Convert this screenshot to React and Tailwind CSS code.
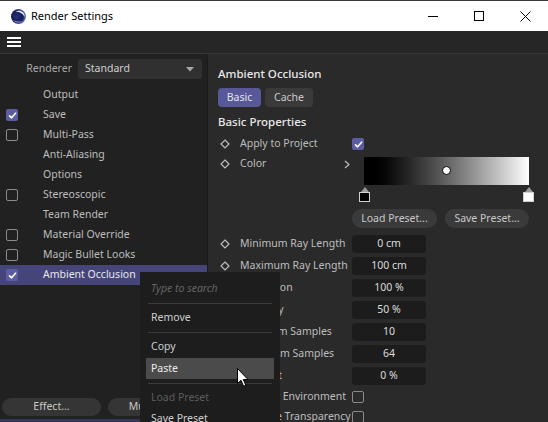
import React from "react";

const font = { fontFamily: '"Noto Sans", "Open Sans", sans-serif' };

function Check({ on }) {
  if (on)
    return (
      <div className="w-[12px] h-[12px] rounded-[2px] bg-[#5c5ca3] flex items-center justify-center shrink-0">
        <svg width="9" height="9" viewBox="0 0 9 9">
          <path d="M1.5 4.8 L3.6 6.8 L7.6 2.2" stroke="#fff" strokeWidth="1.6" fill="none" strokeLinecap="round" strokeLinejoin="round" />
        </svg>
      </div>
    );
  return <div className="w-[12px] h-[12px] rounded-[2px] border-[1.5px] border-[#8a8a8a] shrink-0" />;
}

function Diamond() {
  return (
    <svg width="10" height="10" viewBox="0 0 10 10" className="shrink-0">
      <path d="M5 1 L9 5 L5 9 L1 5 Z" stroke="#bdbdbd" strokeWidth="1.2" fill="none" />
    </svg>
  );
}

const listItems = [
  ["Output", null],
  ["Save", true],
  ["Multi-Pass", false],
  ["Anti-Aliasing", null],
  ["Options", null],
  ["Stereoscopic", false],
  ["Team Render", null],
  ["Material Override", false],
  ["Magic Bullet Looks", false],
  ["Ambient Occlusion", true],
];

const fields = [
  ["Minimum Ray Length", "0 cm"],
  ["Maximum Ray Length", "100 cm"],
  ["Dispersion", "100 %"],
  ["Accuracy", "50 %"],
  ["Minimum Samples", "10"],
  ["Maximum Samples", "64"],
  ["Contrast", "0 %"],
];

export default function App() {
  return (
    <div className="relative w-[548px] h-[422px] overflow-hidden bg-[#2a2a2a] text-[10.5px] whitespace-nowrap" style={font}>
      {/* Title bar */}
      <div className="h-[31px] bg-white border-t border-[#3a3a3a] flex items-center">
        <div className="ml-[10px] w-[17px] h-[17px]">
          <svg width="17" height="17" viewBox="0 0 17 17">
            <defs>
              <radialGradient id="g1" cx="0.4" cy="0.5" r="0.6">
                <stop offset="0" stopColor="#24307a" />
                <stop offset="0.65" stopColor="#161c52" />
                <stop offset="1" stopColor="#7480d0" />
              </radialGradient>
            </defs>
            <circle cx="8.5" cy="8.5" r="7.5" fill="url(#g1)" />
            <path d="M5.5 3.4 C9.8 1.4 15 4 14.7 9 C13.4 5.8 10 3.6 5.5 3.4 Z" fill="#eef0ff" />
            <path d="M3 12 C5 15 10 15.5 12.5 13 C9 14 5.5 13.5 3 12 Z" fill="#8d97dc" />
          </svg>
        </div>
        <span className="ml-[4px] text-[11px] text-black">Render Settings</span>
        <div className="ml-auto flex items-center h-full">
          <div className="w-[46px] h-full flex items-center justify-center">
            <div className="w-[10px] h-[1px] bg-black" />
          </div>
          <div className="w-[46px] h-full flex items-center justify-center">
            <div className="w-[10px] h-[10px] border border-black" />
          </div>
          <div className="w-[46px] h-full flex items-center justify-center">
            <svg width="11" height="11" viewBox="0 0 11 11">
              <path d="M0.5 0.5 L10.5 10.5 M10.5 0.5 L0.5 10.5" stroke="#000" strokeWidth="1" />
            </svg>
          </div>
        </div>
      </div>

      {/* Toolbar */}
      <div className="h-[23px] bg-[#262626] border-b border-[#363636] flex items-center pl-[7px]">
        <div className="flex flex-col gap-[2px]">
          <div className="w-[14px] h-[2px] bg-white" />
          <div className="w-[14px] h-[2px] bg-white" />
          <div className="w-[14px] h-[2px] bg-white" />
        </div>
      </div>

      {/* Main */}
      <div className="flex h-[368px]">
        {/* Left panel */}
        <div className="w-[208px] bg-[#212121] flex flex-col border-r border-[#1a1a1a]">
          <div className="flex items-center h-[20px] mt-[5px]">
            <span className="w-[72px] text-right text-[#a8a8a8]">Renderer</span>
            <div className="ml-[6px] w-[124px] h-[20px] rounded-[3px] bg-[#303030] flex items-center pl-[7px] pr-[8px]">
              <span className="text-[#cfcfcf]">Standard</span>
              <svg className="ml-auto" width="8" height="5" viewBox="0 0 8 5">
                <path d="M0 0 L8 0 L4 4.5 Z" fill="#a8a8a8" />
              </svg>
            </div>
          </div>
          <div className="mt-[6px] flex flex-col">
            {listItems.map(([name, chk], i) => (
              <div
                key={name}
                className={
                  "h-[20px] flex items-center " + (i === 9 ? "bg-[#45457a]" : "")
                }
              >
                <div className="w-[43px] pl-[6px]">{chk !== null && <Check on={chk} />}</div>
                <span className={i === 9 ? "text-[#e6e6e6]" : "text-[#bdbdbd]"}>{name}</span>
              </div>
            ))}
          </div>
          <div className="flex-1" />
          <div className="flex gap-[7px] pl-[2px] h-[18px]">
            <div className="w-[99px] h-[18px] rounded-full bg-[#353535] flex items-center justify-center text-[#c8c8c8]">
              Effect...
            </div>
            <div className="w-[99px] h-[18px] rounded-full bg-[#353535] flex items-center justify-center pl-[2px] text-[#c8c8c8]">
              Multi-Pass...
            </div>
          </div>
          <div className="mt-[3px] h-[3px] bg-[#363658]" />
        </div>

        {/* Right panel */}
        <div className="flex-1 bg-[#2a2a2a] pl-[10px] pt-[12px]">
          <div className="h-[16px] flex items-center text-[11.5px] font-medium text-[#e8e8e8]">
            Ambient Occlusion
          </div>
          <div className="mt-[6px] flex gap-[4px] h-[19px]">
            <div className="w-[43px] rounded-[4px] bg-[#57579a] flex items-center justify-center text-[#e6e6e6]">
              Basic
            </div>
            <div className="w-[48px] rounded-[4px] bg-[#3a3a3a] flex items-center justify-center text-[#c8c8c8]">
              Cache
            </div>
          </div>
          <div className="mt-[7px] h-[16px] flex items-center text-[11.5px] font-medium text-[#e8e8e8]">
            Basic Properties
          </div>
          {/* Apply */}
          <div className="mt-[4px] h-[20px] flex items-center">
            <div className="w-[13px] pl-[2px]"><Diamond /></div>
            <span className="ml-[9px] w-[112px] text-[#bdbdbd]">Apply to Project</span>
            <Check on={true} />
          </div>
          {/* Color */}
          <div className="h-[49px] flex">
            <div className="h-[20px] flex items-center">
              <div className="w-[13px] pl-[2px]"><Diamond /></div>
              <span className="ml-[9px] w-[104px] text-[#bdbdbd]">Color</span>
              <svg width="6" height="9" viewBox="0 0 6 9">
                <path d="M1 1 L5 4.5 L1 8" stroke="#bdbdbd" strokeWidth="1.2" fill="none" />
              </svg>
            </div>
            <div className="ml-[14px] mt-[3px] w-[165px] flex flex-col">
              <div className="relative h-[28px] bg-gradient-to-r from-black to-white">
                <div className="absolute left-[78px] top-[9px] w-[9px] h-[9px] rounded-full bg-white border border-black" />
              </div>
              <div className="flex justify-between -mx-[5px] mt-[2px]">
                {["bg-black", "bg-white"].map((c) => (
                  <div key={c} className="flex flex-col items-center">
                    <svg width="10" height="5" viewBox="0 0 10 5">
                      <path d="M5 0 L9 5 L1 5 Z" fill="#9a9a9a" />
                    </svg>
                    <div className={"w-[11px] h-[10px] border border-[#d0d0d0] " + c} />
                  </div>
                ))}
              </div>
            </div>
          </div>
          {/* Preset buttons */}
          <div className="mt-[6px] ml-[134px] flex gap-[8px] h-[19px]">
            <div className="w-[85px] rounded-full bg-[#3a3a3a] flex items-center justify-center text-[#c8c8c8]">
              Load Preset...
            </div>
            <div className="w-[84px] rounded-full bg-[#3a3a3a] flex items-center justify-center text-[#c8c8c8]">
              Save Preset...
            </div>
          </div>
          {/* fields */}
          <div className="mt-[5px]">
            {fields.map(([l, v]) => (
              <div key={l} className="h-[22px] flex items-center">
                <div className="w-[13px] pl-[2px]"><Diamond /></div>
                <span className="ml-[9px] w-[112px] text-[#bdbdbd]">{l}</span>
                <div className="w-[74px] h-[18px] rounded-[3px] bg-[#1c1c1c] flex items-center justify-center text-[#dcdcdc]">
                  {v}
                </div>
              </div>
            ))}
            {["Use Sky Environment", "Evaluate Transparency"].map((l) => (
              <div key={l} className="h-[20px] flex items-center">
                <div className="w-[13px] pl-[2px]"><Diamond /></div>
                <span className="ml-[9px] w-[112px] text-[#bdbdbd] text-right pr-[6px]">{l}</span>
                <Check on={false} />
              </div>
            ))}
          </div>
        </div>
      </div>

      {/* Context menu */}
      <div className="absolute left-[140px] top-[272px] w-[140px] h-[160px] bg-[#1d1d1d] flex flex-col">
        <div className="h-[31px] shrink-0 flex items-center pl-[11px] pt-[3px] italic text-[#646464]">Type to search</div>
        <div className="mx-[8px] h-[1px] shrink-0 bg-[#3a3a3a]" />
        <div className="h-[28px] shrink-0 flex items-center pl-[11px] text-[#cdcdcd]">Remove</div>
        <div className="mx-[8px] h-[1px] shrink-0 bg-[#3a3a3a]" />
        <div className="h-[25px] shrink-0 flex items-center pl-[11px] pt-[3px] text-[#cdcdcd]">Copy</div>
        <div className="mx-[6px] h-[21px] shrink-0 flex items-center pl-[5px] bg-[#4b4b4b] text-[#ececec]">Paste</div>
        <div className="h-[4px] shrink-0" />
        <div className="mx-[8px] h-[1px] shrink-0 bg-[#3a3a3a]" />
        <div className="h-[28px] shrink-0 flex items-center pl-[11px] text-[#5c5c5c]">Load Preset</div>
        <div className="h-[14px] shrink-0 flex items-center pl-[11px] text-[#cdcdcd]">Save Preset</div>
      </div>

      {/* Cursor */}
      <svg className="absolute left-[237px] top-[368px]" width="13" height="20" viewBox="0 0 13 20">
        <path d="M0.5 0.5 L0.5 15.5 L4 12.3 L6.6 18.2 L8.8 17.2 L6.3 11.5 L11 11.5 Z" fill="#fff" stroke="#000" strokeWidth="1" strokeLinejoin="round" />
      </svg>
    </div>
  );
}
